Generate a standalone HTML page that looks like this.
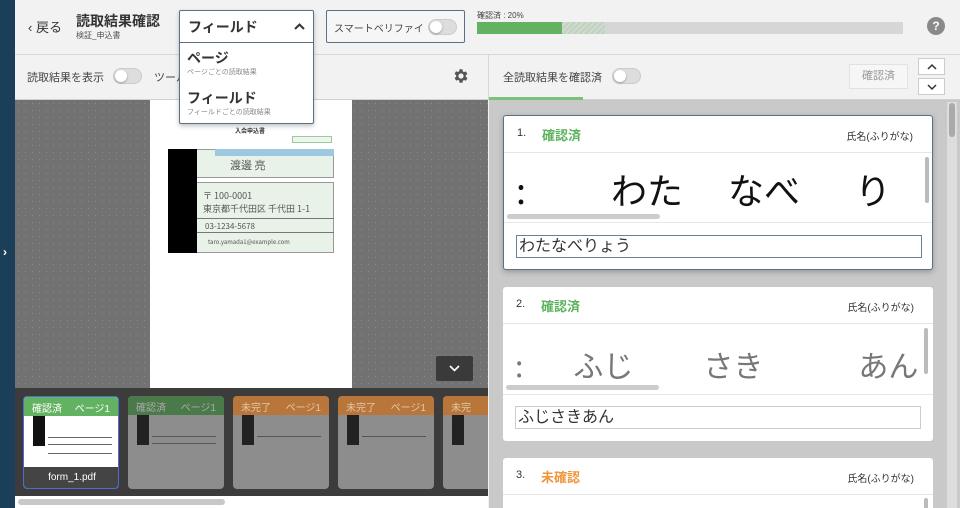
<!DOCTYPE html>
<html><head><meta charset="utf-8"><style>
*{box-sizing:border-box;margin:0;padding:0}
html,body{width:960px;height:508px;overflow:hidden}
body{font-family:"Liberation Sans","Noto Sans CJK JP",sans-serif;background:#f2f2f2;position:relative;color:#333}
.a{position:absolute}
.tog{position:absolute;width:29px;height:16px;border-radius:8px;background:#ddd;border:1px solid #ccc}
.tog::after{content:"";position:absolute;left:1px;top:1px;width:12px;height:12px;border-radius:50%;background:#fff;box-shadow:0 1px 2px rgba(0,0,0,.3)}
.card{position:absolute;left:503px;width:430px;background:#fff;border-radius:3px}
.card .hd{height:37px;border-bottom:1px solid #e6e6e6;position:relative}
.num{position:absolute;left:13px;top:11px;font-size:11px;color:#333}
.st{position:absolute;left:38px;top:9px;font-size:13px;font-weight:bold}
.lbl{position:absolute;right:19px;top:12px;font-size:10px;color:#333}
.img{height:70px;position:relative;overflow:hidden;border-bottom:1px solid #e6e6e6;background:#fafafa}
.hw{position:absolute;font-family:"WenQuanYi Zen Hei","Noto Sans CJK JP",sans-serif;white-space:nowrap}
.inp{position:absolute;left:12px;width:406px;height:23px;border:1px solid #ccc;font-size:16px;padding-left:2px;line-height:21px}
.thumb{position:absolute;top:396px;width:96px;height:93px;border-radius:4px;background:#8d8d8d;overflow:hidden}
.thumb .t{height:19px;font-size:10px;color:#ddd;padding:3px 8px;display:flex;justify-content:space-between}
.ln{position:absolute;height:1px;background:#666}
</style></head><body>
<div class="a" style="left:0;top:0;width:15px;height:508px;background:#1b3f58"></div>
<div class="a" style="left:3px;top:245px;color:#fff;font-size:12px;font-weight:bold">›</div>
<div class="a" style="left:15px;top:54px;width:945px;height:1px;background:#d8d8d8"></div>
<div class="a" style="left:28px;top:17px;font-size:13px;color:#333">‹ 戻る</div>
<div class="a" style="left:76px;top:11px;font-size:14px;font-weight:bold;color:#333">読取結果確認</div>
<div class="a" style="left:76px;top:30px;font-size:8px;color:#555">検証_申込書</div>
<div class="a" style="left:326px;top:10px;width:139px;height:33px;border:1px solid #5a7088;background:#f6f6f6;border-radius:2px"></div>
<div class="a" style="left:334px;top:20px;font-size:10px;color:#444">スマートベリファイ</div>
<div class="tog" style="left:428px;top:19px"></div>
<div class="a" style="left:477px;top:10px;font-size:8px;color:#444">確認済 : 20%</div>
<div class="a" style="left:477px;top:22px;width:426px;height:12px;background:#d6d6d6"></div>
<div class="a" style="left:477px;top:22px;width:85px;height:12px;background:#62b262"></div>
<div class="a" style="left:562px;top:22px;width:43px;height:12px;background:repeating-linear-gradient(135deg,#b9d6b9 0 2px,#d6d6d6 2px 4px)"></div>
<div class="a" style="left:927px;top:17px;width:18px;height:18px;border-radius:50%;background:#8a8a8a;color:#fff;font-size:12px;font-weight:bold;text-align:center;line-height:18px">?</div>
<div class="a" style="left:15px;top:99px;width:945px;height:1px;background:#d0d0d0"></div>
<div class="a" style="left:488px;top:55px;width:1px;height:44px;background:#d8d8d8"></div>
<div class="a" style="left:27px;top:69px;font-size:11px;color:#444">読取結果を表示</div>
<div class="tog" style="left:113px;top:68px"></div>
<div class="a" style="left:154px;top:69px;font-size:11px;color:#444">ツール</div>
<svg class="a" style="left:452px;top:67px" width="18" height="18" viewBox="0 0 24 24"><path fill="#555" d="M19.4 13a7.5 7.5 0 000-2l2.1-1.6-2-3.5-2.5 1a7 7 0 00-1.7-1L15 3h-4l-.4 2.6a7 7 0 00-1.7 1l-2.5-1-2 3.5L6.6 11a7.5 7.5 0 000 2l-2.1 1.6 2 3.5 2.5-1a7 7 0 001.7 1L11 21h4l.4-2.6a7 7 0 001.7-1l2.5 1 2-3.5zM13 15.5a3.5 3.5 0 110-7 3.5 3.5 0 010 7z" transform="translate(-1 0)"/></svg>
<div class="a" style="left:503px;top:69px;font-size:11px;color:#444">全読取結果を確認済</div>
<div class="tog" style="left:612px;top:68px"></div>
<div class="a" style="left:489px;top:97px;width:94px;height:3px;background:#7cc07c"></div>
<div class="a" style="left:849px;top:64px;width:59px;height:25px;border:1px solid #e2e2e2;background:#f6f6f6;font-size:11px;color:#999;text-align:center;line-height:23px">確認済</div>
<div class="a" style="left:918px;top:58px;width:27px;height:17px;border:1px solid #ccc;background:#fff"><svg class="a" style="left:8px;top:4px" width="10" height="7"><path d="M1 6L5 2L9 6" stroke="#333" stroke-width="1.5" fill="none"/></svg></div>
<div class="a" style="left:918px;top:78px;width:27px;height:17px;border:1px solid #ccc;background:#fff"><svg class="a" style="left:8px;top:5px" width="10" height="7"><path d="M1 1L5 5L9 1" stroke="#333" stroke-width="1.5" fill="none"/></svg></div>
<!-- viewer -->
<div class="a" style="left:15px;top:100px;width:473px;height:288px;background:#727272;background-image:radial-gradient(#8a8a8a 0.6px,transparent 0.8px);background-size:7px 7px"></div>
<div class="a" style="left:150px;top:100px;width:202px;height:288px;background:#fff"></div>
<div class="a" style="left:235px;top:126px;font-size:6px;font-weight:bold">入会申込書</div>
<div class="a" style="left:292px;top:136px;width:40px;height:7px;border:1px solid #9c9;background:#eef5ee"></div>
<div class="a" style="left:168px;top:149px;width:166px;height:104px;background:#e8f2e8;border:1px solid #999"></div>
<div class="a" style="left:168px;top:149px;width:29px;height:104px;background:#000"></div>
<div class="a" style="left:215px;top:149px;width:119px;height:7px;background:#9cc8e0"></div>
<div class="a" style="left:197px;top:177px;width:137px;height:6px;background:#fff;border-top:1px solid #999;border-bottom:1px solid #999"></div>
<div class="a" style="left:197px;top:218px;width:137px;height:1px;background:#777"></div>
<div class="a" style="left:197px;top:232px;width:137px;height:1px;background:#777"></div>
<div class="a hw" style="left:230px;top:157px;font-size:11px;color:#555">渡邊 亮</div>
<div class="a hw" style="left:203px;top:189px;font-size:9px;color:#555">〒 100-0001<br>東京都千代田区 千代田 1-1</div>
<div class="a hw" style="left:205px;top:221px;font-size:8px;color:#555">03-1234-5678</div>
<div class="a hw" style="left:208px;top:237px;font-size:6px;color:#555">taro.yamada1@example.com</div>
<div class="a" style="left:436px;top:356px;width:37px;height:25px;background:#3a3a3a;border-radius:2px"><svg class="a" style="left:13px;top:9px" width="11" height="7"><path d="M1 1L5.5 5.5L10 1" stroke="#fff" stroke-width="1.6" fill="none"/></svg></div>
<!-- dropdown -->
<div class="a" style="left:179px;top:10px;width:135px;height:114px;background:#fff;border:1px solid #5a7088;border-radius:2px;box-shadow:0 2px 5px rgba(0,0,0,.25)"></div>
<div class="a" style="left:179px;top:42px;width:135px;height:1px;background:#5a7088"></div>
<div class="a" style="left:188px;top:17px;font-size:14px;font-weight:bold;color:#333">フィールド</div>
<svg class="a" style="left:294px;top:23px" width="11" height="7"><path d="M1 6L5.5 1.5L10 6" stroke="#333" stroke-width="2" fill="none"/></svg>
<div class="a" style="left:187px;top:48px;font-size:14px;font-weight:bold;color:#333">ページ</div>
<div class="a" style="left:187px;top:67px;font-size:7px;color:#888">ページごとの読取結果</div>
<div class="a" style="left:187px;top:88px;font-size:14px;font-weight:bold;color:#333">フィールド</div>
<div class="a" style="left:187px;top:107px;font-size:7px;color:#888">フィールドごとの読取結果</div>
<!-- thumbnails -->
<div class="a" style="left:15px;top:388px;width:473px;height:108px;background:#3c3c3c"></div>
<div class="a" style="left:15px;top:496px;width:473px;height:12px;background:#fff"></div>
<div class="a" style="left:18px;top:499px;width:207px;height:6px;border-radius:3px;background:#c8c8c8"></div>
<div class="thumb" style="left:23px;border:1px solid #4a6fd0;background:#fff"><div class="t" style="background:#62b262;color:#fff"><span>確認済</span><span>ページ1</span></div><div class="a" style="left:9px;top:19px;width:12px;height:30px;background:#111"></div><div class="ln" style="left:24px;top:40px;width:64px"></div><div class="ln" style="left:24px;top:47px;width:64px"></div><div class="ln" style="left:24px;top:56px;width:64px"></div><div class="a" style="left:0;top:70px;width:96px;height:23px;background:#444;color:#fff;font-size:10px;text-align:center;line-height:22px">form_1.pdf</div></div>
<div class="thumb" style="left:128px"><div class="t" style="background:#4a7a4a;color:#aaa"><span>確認済</span><span>ページ1</span></div><div class="a" style="left:9px;top:19px;width:12px;height:30px;background:#222"></div><div class="ln" style="left:24px;top:40px;width:64px;background:#555"></div><div class="ln" style="left:24px;top:47px;width:64px;background:#555"></div></div>
<div class="thumb" style="left:233px"><div class="t" style="background:#b8763a;color:#e4c8a8"><span>未完了</span><span>ページ1</span></div><div class="a" style="left:9px;top:19px;width:12px;height:30px;background:#222"></div><div class="ln" style="left:24px;top:40px;width:64px;background:#555"></div></div>
<div class="thumb" style="left:338px"><div class="t" style="background:#b8763a;color:#e4c8a8"><span>未完了</span><span>ページ1</span></div><div class="a" style="left:9px;top:19px;width:12px;height:30px;background:#222"></div><div class="ln" style="left:24px;top:40px;width:64px;background:#555"></div></div>
<div class="thumb" style="left:443px;width:45px;border-radius:4px 0 0 4px"><div class="t" style="background:#b8763a;color:#e4c8a8"><span>未完了</span></div><div class="a" style="left:9px;top:19px;width:12px;height:30px;background:#222"></div></div>
<!-- right list -->
<div class="a" style="left:489px;top:100px;width:471px;height:408px;background:#c9c9c9"></div>
<div class="a" style="left:947px;top:102px;width:10px;height:406px;background:#ddd"></div>
<div class="a" style="left:949px;top:103px;width:6px;height:34px;border-radius:3px;background:#aaa"></div>
<div class="card" style="top:115px;height:155px;border:1px solid #5a7088;box-shadow:0 2px 6px rgba(0,0,0,.25)">
<div class="hd"><span class="num">1.</span><span class="st" style="color:#5cb25c">確認済</span><span class="lbl">氏名(ふりがな)</span></div>
<div class="img" style="height:70px;background:#fff"><div class="hw" style="left:12px;top:10px;font-size:36px;color:#111">:<span style="margin-left:85px">わた</span><span style="margin-left:45px">なべ</span><span style="margin-left:55px">り</span></div><div class="a" style="left:3px;top:61px;width:153px;height:5px;border-radius:3px;background:#ccc"></div><div class="a" style="left:421px;top:4px;width:4px;height:46px;border-radius:2px;background:#bbb"></div></div>
<div class="inp" style="top:119px;border-color:#6a8098">わたなべりょう</div>
</div>
<div class="card" style="top:287px;height:154px">
<div class="hd"><span class="num">2.</span><span class="st" style="color:#5cb25c">確認済</span><span class="lbl">氏名(ふりがな)</span></div>
<div class="img" style="height:71px;background:#fff"><div class="hw" style="left:12px;top:18px;font-size:30px;color:#777">:<span style="margin-left:50px">ふじ</span><span style="margin-left:70px">さき</span><span style="margin-left:95px">あん</span></div><div class="a" style="left:3px;top:61px;width:153px;height:5px;border-radius:3px;background:#ccc"></div><div class="a" style="left:421px;top:4px;width:4px;height:46px;border-radius:2px;background:#bbb"></div></div>
<div class="inp" style="top:119px">ふじさきあん</div>
</div>
<div class="card" style="top:458px;height:60px">
<div class="hd"><span class="num">3.</span><span class="st" style="color:#f0953a">未確認</span><span class="lbl">氏名(ふりがな)</span></div>
<div class="a" style="left:421px;top:40px;width:4px;height:20px;border-radius:2px;background:#bbb"></div>
</div>
</body></html>
